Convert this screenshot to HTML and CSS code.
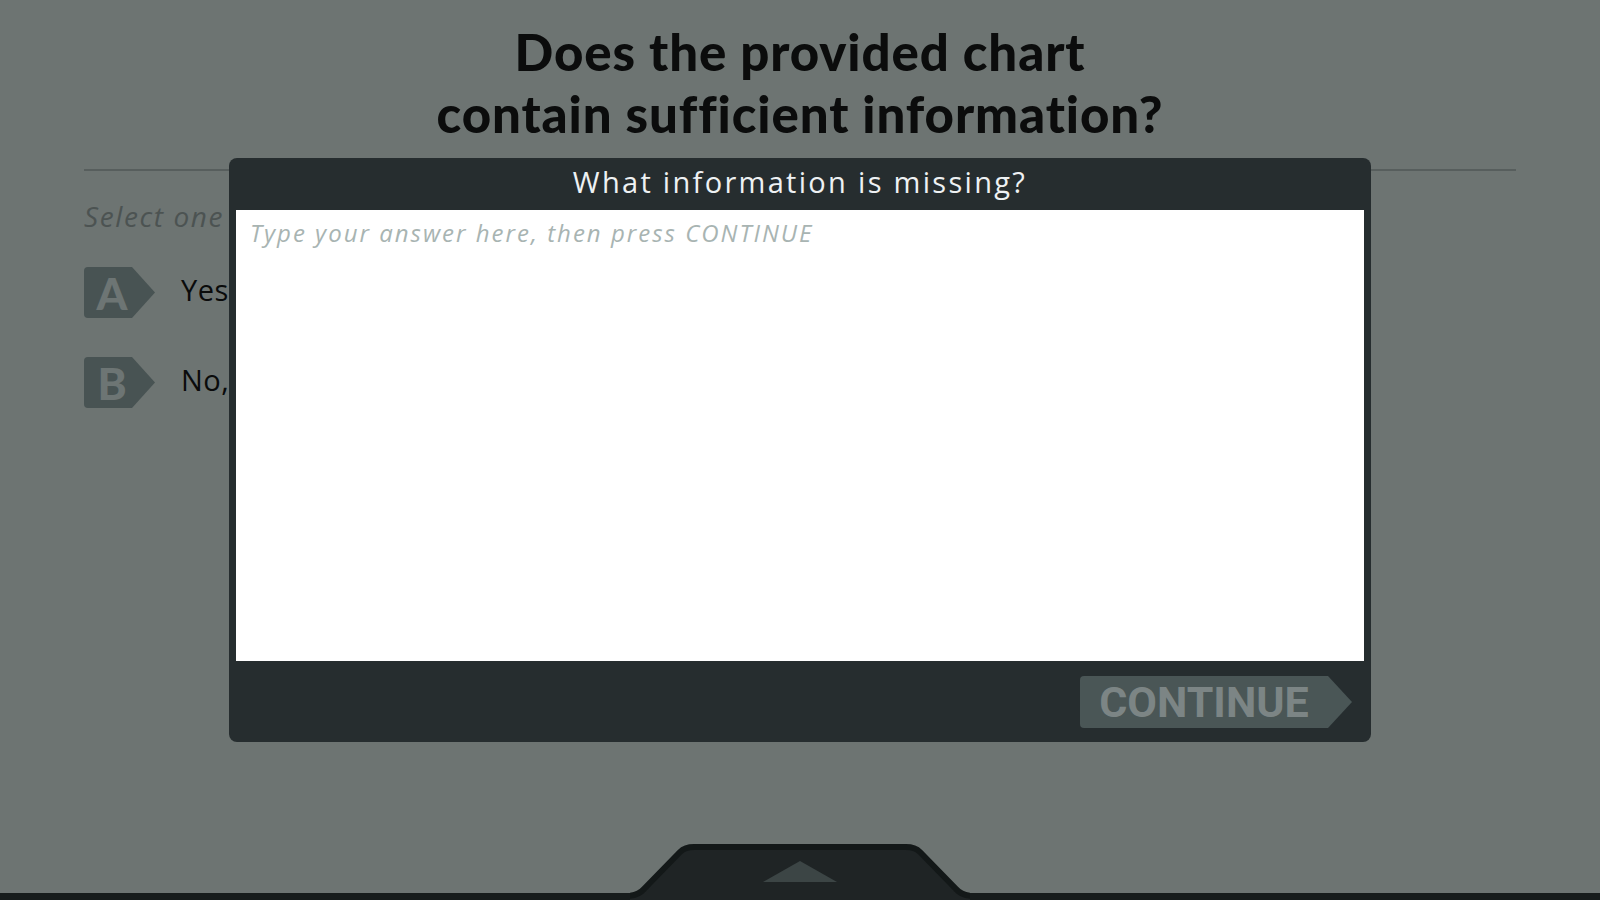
FILE: index.html
```html
<!DOCTYPE html>
<html lang="en">
<head>
<meta charset="utf-8">
<title>Question</title>
<link rel="stylesheet" href="styles.css">
</head>
<body>
<div class="page">
  <main class="content">
    <h1 class="question">Does the provided chart<br>contain sufficient information?</h1>
    <hr class="rule">
    <p class="prompt">Select one</p>
    <ul class="options">
      <li class="option"><span class="badge">A</span><span class="label">Yes, it does.</span></li>
      <li class="option"><span class="badge">B</span><span class="label">No, it does not.</span></li>
    </ul>
  </main>
  <footer class="dock">
    <svg class="dock-tab" width="340" height="56" viewBox="0 0 340 56" aria-hidden="true">
      <path d="M-4,59 L-4,52 Q8,52 14,45 L50,8 Q55,3 64,3 L276,3 Q285,3 290,8 L326,45 Q332,52 344,52 L344,59 Z" fill="#1f2425" stroke="#131818" stroke-width="6"/>
      <polygon points="133,38 170,17 207,38" fill="#3c4545"/>
    </svg>
  </footer>
</div>
<div class="overlay">
  <section class="modal">
    <header class="modal-head">What information is missing?</header>
    <div class="modal-body">
      <textarea class="answer" placeholder="Type your answer here, then press CONTINUE"></textarea>
    </div>
    <footer class="modal-foot">
      <button class="continue" type="button">CONTINUE</button>
    </footer>
  </section>
</div>
</body>
</html>
```
FILE: styles.css
```css
* { box-sizing: border-box; }
html, body { margin: 0; padding: 0; }
body {
  background: #6d7472;
  font-family: "Open Sans", "Liberation Sans", sans-serif;
  width: 1600px;
  height: 900px;
  overflow: hidden;
}
.page {
  height: 900px;
  display: flex;
  flex-direction: column;
}
.content {
  flex: 1;
  padding: 21px 84px 0 84px;
}
.question {
  margin: 0;
  text-align: center;
  font-family: "Lato", "Liberation Sans", sans-serif;
  font-weight: 900;
  font-size: 51px;
  line-height: 62px;
  letter-spacing: 0.9px;
  font-variant-ligatures: none;
  color: #0b0c0c;
}
.rule {
  margin: 24px 0 0 0;
  border: 0;
  height: 2px;
  background: #575e5d;
}
.prompt {
  margin: 28px 0 0 0;
  font-style: italic;
  font-size: 28px;
  line-height: 34px;
  letter-spacing: 1.6px;
  color: #4c5352;
}
.options {
  list-style: none;
  margin: 34px 0 0 0;
  padding: 0;
  display: flex;
  flex-direction: column;
  gap: 39px;
}
.option {
  display: flex;
  align-items: center;
  gap: 26px;
  height: 51px;
}
.badge {
  width: 71px;
  height: 51px;
  padding-right: 15px;
  display: flex;
  align-items: center;
  justify-content: center;
  background: #485353;
  border-radius: 4px;
  clip-path: polygon(0 0, 48px 0, 100% 50%, 48px 100%, 0 100%);
  font-family: "Lato", "Liberation Sans", sans-serif;
  font-weight: 900;
  font-size: 44px;
  color: #6d7574;
}
.label {
  font-size: 29px;
  letter-spacing: 0.5px;
  margin-bottom: 6px;
  color: #0a0b0b;
}
.dock {
  height: 56px;
  display: flex;
  justify-content: center;
  align-items: flex-end;
  background: linear-gradient(to top, #171c1c 7px, transparent 7px);
}
.dock-tab { display: block; }

.overlay {
  position: fixed;
  inset: 0;
  display: flex;
  justify-content: center;
  align-items: flex-start;
  padding-top: 158px;
}
.modal {
  width: 1142px;
  background: #262d2f;
  border-radius: 8px;
  display: flex;
  flex-direction: column;
}
.modal-head {
  height: 52px;
  padding-bottom: 6px;
  display: flex;
  align-items: center;
  justify-content: center;
  color: #eef1f3;
  font-size: 29px;
  letter-spacing: 2.3px;
}
.modal-body {
  padding: 0 7px;
}
.answer {
  display: block;
  width: 100%;
  height: 451px;
  border: 0;
  margin: 0;
  resize: none;
  outline: none;
  background: #ffffff;
  padding: 6px 14px;
  font-family: "Open Sans", "Liberation Sans", sans-serif;
  font-style: italic;
  font-size: 24px;
  letter-spacing: 2px;
  color: #333;
}
.answer::placeholder {
  color: #a8b4b2;
  opacity: 1;
}
.modal-foot {
  height: 81px;
  display: flex;
  justify-content: flex-end;
  align-items: center;
  padding-right: 19px;
}
.continue {
  width: 272px;
  height: 52px;
  border: 0;
  padding: 0 24px 0 0;
  margin-top: 1px;
  background: #4a5656;
  border-radius: 4px;
  clip-path: polygon(0 0, 248px 0, 100% 50%, 248px 100%, 0 100%);
  font-family: "Roboto", "Liberation Sans", sans-serif;
  font-weight: 700;
  font-size: 43px;
  color: #7c8585;
  cursor: pointer;
}
```
